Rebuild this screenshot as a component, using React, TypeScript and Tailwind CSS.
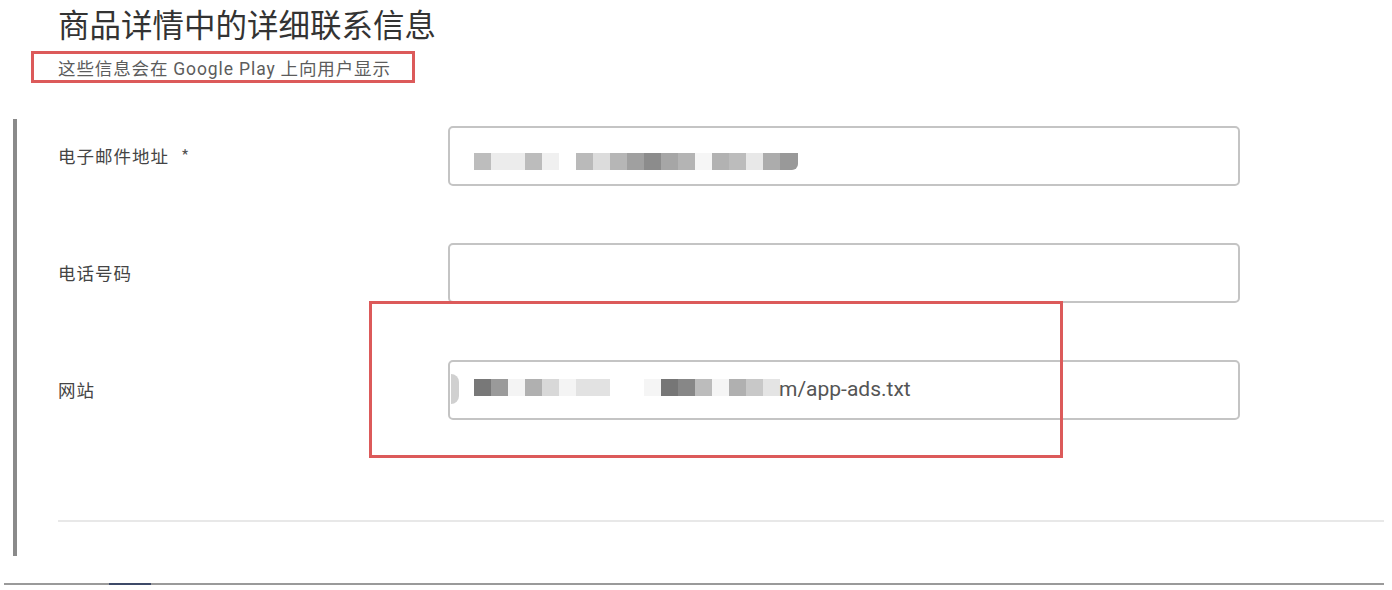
import React from "react";

const cjk = { fontFamily: '"Noto Sans CJK SC", "Noto Sans", sans-serif' };
const latin = { fontFamily: 'Roboto, "Noto Sans CJK SC", sans-serif' };

// mosaic blocks used to hide the real values
const emailBlocks = [
  "#bdbdbd", "#ececec", "#ececec", "#bcbcbc", "#f0f0f0", "#ffffff", "#bababa", "#dcdcdc",
  "#b6b6b6", "#a0a0a0", "#8c8c8c", "#a6a6a6", "#b4b4b4", "#f6f6f6", "#b2b2b2", "#bcbcbc",
  "#e8e8e8", "#acacac",
];
const siteBlocks = [
  "#787878", "#9a9a9a", "#f4f4f4", "#b0b0b0", "#d8d8d8", "#f4f4f4", "#e2e2e2", "#e2e2e2",
  "#ffffff", "#ffffff", "#f5f5f5", "#767676", "#878787", "#bcbcbc", "#f5f5f5", "#b0b0b0",
  "#c8c8c8", "#e4e4e4",
];

function Mosaic({ blocks, tail }: { blocks: string[]; tail?: boolean }) {
  return (
    <div className="flex h-[17px]">
      {blocks.map((c, i) => (
        <div key={i} className="h-full w-[17px] shrink-0" style={{ backgroundColor: c }} />
      ))}
      {tail && <div className="h-full w-[18px] shrink-0 rounded-br-[6px] bg-[#999999]" />}
    </div>
  );
}

function Row({ label, required, children }: { label: string; required?: boolean; children?: React.ReactNode }) {
  return (
    <div className="grid h-[117px] grid-cols-[390px_792px] items-start">
      <div className="flex h-[60px] items-center text-[17.5px] tracking-[1px] text-[#444]" style={cjk}>
        {label}
        {required && <span className="ml-[12px] text-[#555]">*</span>}
      </div>
      <div className="relative flex h-[60px] items-center rounded-[5px] border-2 border-[#c4c4c4] bg-white pl-[24px]">
        {children}
      </div>
    </div>
  );
}

export default function App() {
  return (
    <div className="relative h-[590px] w-[1392px] overflow-hidden bg-white">
      <h1 className="ml-[58px] pt-[2px] text-[31.5px] leading-[42px] font-normal text-[#333]" style={cjk}>
        商品详情中的详细联系信息
      </h1>

      <div className="relative ml-[58px] mt-[13px] w-fit text-[17.5px] leading-[22px] tracking-[0.9px] text-[#5c5c5c]" style={cjk}>
        这些信息会在 <span style={latin}>Google Play</span> 上向用户显示
        <div className="absolute -left-[27px] -top-[6px] -bottom-[3px] w-[384px] border-[3px] border-[#dc5a5a]" />
      </div>

      <div className="ml-[13px] mt-[39px] h-[437px] border-l-4 border-[#8a8a8a] pl-[41px] pt-[7px]">
        <Row label="电子邮件地址" required>
          <div className="mt-[10px]">
            <Mosaic blocks={emailBlocks} tail />
          </div>
        </Row>
        <Row label="电话号码" />
        <Row label="网站">
          <div className="absolute left-[1px] top-[12px] h-[30px] w-[8px] rounded-r-full bg-[#d0d0d0]" />
          <div className="mt-[-6px]">
            <Mosaic blocks={siteBlocks} />
          </div>
          <span className="ml-[-1px] text-[21px] text-[#555]" style={latin}>
            m/app-ads.txt
          </span>
        </Row>
        <div className="mr-[8px] mt-[43px] h-[2px] bg-[#e8e8e8]" />
      </div>

      <div className="ml-[4px] mr-[8px] mt-[27px] flex h-[2px] bg-[#9a9a9a]">
        <div className="ml-[105px] h-full w-[42px] bg-[#3e4a68]" />
      </div>

      {/* annotation around the website field */}
      <div className="absolute left-[369px] top-[301px] h-[157px] w-[694px] border-[3px] border-[#dc5a5a]" />
    </div>
  );
}
